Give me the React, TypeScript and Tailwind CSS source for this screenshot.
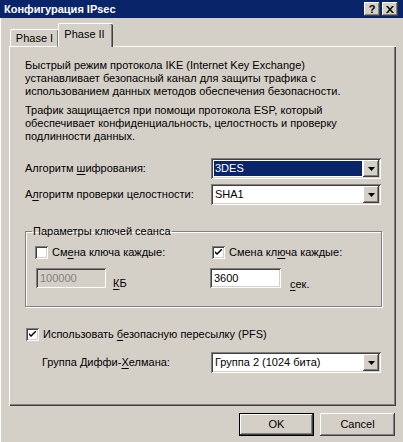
import React from "react";

const raised =
  "shadow-[inset_-1px_-1px_#404040,inset_1px_1px_#ffffff,inset_-2px_-2px_#808080,inset_2px_2px_#d4d0c8]";
const sunken =
  "shadow-[inset_1px_1px_#808080,inset_-1px_-1px_#ffffff,inset_2px_2px_#404040,inset_-2px_-2px_#d4d0c8]";

function U({ children }: { children: React.ReactNode }) {
  return <span className="underline underline-offset-[2px]">{children}</span>;
}

function Arrow() {
  return (
    <div className={`w-[16px] h-[17px] bg-[#d4d0c8] flex items-center justify-center ${raised}`}>
      <svg width="7" height="4" viewBox="0 0 7 4">
        <polygon points="0,0 7,0 3.5,4" fill="#000" />
      </svg>
    </div>
  );
}

function Combo({ value, selected }: { value: string; selected?: boolean }) {
  return (
    <div className={`w-[170px] h-[21px] bg-white flex items-center p-[2px] ${sunken}`}>
      <div className="flex-1 h-full pl-[1px] pr-[1px] flex items-center">
        <div
          className={
            selected
              ? "w-full h-[15px] bg-[#0a246a] text-white pl-[1px] flex items-center"
              : "w-full h-[15px] pl-[1px] flex items-center"
          }
        >
          {value}
        </div>
      </div>
      <Arrow />
    </div>
  );
}

function Check({ checked }: { checked?: boolean }) {
  return (
    <div className={`w-[13px] h-[13px] bg-white shrink-0 flex items-center justify-center ${sunken}`}>
      {checked && (
        <svg width="7" height="7" viewBox="0 0 7 7">
          <path d="M0 2 L0 4 L2 6 L7 1 L7 -1 L2 4 Z" fill="#000" />
        </svg>
      )}
    </div>
  );
}

function Button({ label, primary }: { label: string; primary?: boolean }) {
  return (
    <div
      className={`w-[75px] h-[23px] bg-[#d4d0c8] flex items-center justify-center ${
        primary
          ? "border border-black shadow-[inset_-1px_-1px_#404040,inset_1px_1px_#ffffff,inset_-2px_-2px_#808080]"
          : raised
      }`}
    >
      {label}
    </div>
  );
}

export default function App() {
  return (
    <div className="w-[403px] h-[442px] bg-[#d4d0c8] overflow-hidden flex flex-col font-['Liberation_Sans',Tahoma,sans-serif] text-[11px] leading-[13px] text-black">
      {/* title bar */}
      <div className="h-[18px] bg-[#0a246a] flex items-center justify-between pl-[4px] pr-[5px] shrink-0">
        <span className="text-white font-bold text-[11px]">Конфигурация IPsec</span>
        <div className="flex gap-[2px]">
          <div className={`w-[16px] h-[14px] bg-[#d4d0c8] flex items-center justify-center font-bold text-[11px] ${raised}`}>?</div>
          <div className={`w-[16px] h-[14px] bg-[#d4d0c8] flex items-center justify-center ${raised}`}>
            <svg width="8" height="7" viewBox="0 0 8 7">
              <path d="M0 0 L2 0 L4 2.5 L6 0 L8 0 L5 3.5 L8 7 L6 7 L4 4.5 L2 7 L0 7 L3 3.5 Z" fill="#000" />
            </svg>
          </div>
        </div>
      </div>

      <div className="flex-1 flex flex-col pl-[8px] pr-[7px] border-l border-[#ffffff]">
        {/* tabs */}
        <div className="flex items-end pt-[5px] pl-[1px] relative z-10 mb-[-1px]">
          <div className="w-[48px] h-[18px] border-t border-l border-white rounded-tl-[2px] shadow-[inset_-1px_0_#808080] flex items-center justify-center">
            Phase I
          </div>
          <div className="w-[55px] h-[24px] bg-[#d4d0c8] border-t border-l border-white rounded-tl-[2px] rounded-tr-[2px] shadow-[inset_-1px_0_#404040,inset_-2px_0_#808080] flex items-start justify-center pt-[4px] pr-[3px]">
            Phase II
          </div>
        </div>

        {/* panel */}
        <div className="h-[360px] border-t border-l border-white shadow-[inset_-1px_-1px_#404040,inset_-2px_-2px_#808080] pl-[15px] pt-[12px] flex flex-col">
          <p>
            Быстрый режим протокола IKE (Internet Key Exchange)
            <br />
            устанавливает безопасный канал для защиты трафика с
            <br />
            использованием данных методов обеспечения безопасности.
          </p>
          <p className="mt-[6px]">
            Трафик защищается при помощи протокола ESP, который
            <br />
            обеспечивает конфиденциальность, целостность и проверку
            <br />
            подлинности данных.
          </p>

          <div className="flex items-center mt-[15px]">
            <div className="w-[186px]">
              Алгоритм <U>ш</U>ифрования:
            </div>
            <Combo value="3DES" selected />
          </div>
          <div className="flex items-center mt-[5px]">
            <div className="w-[186px]">
              А<U>л</U>горитм проверки целостности:
            </div>
            <Combo value="SHA1" />
          </div>

          <fieldset className="w-[357px] mt-[20px] h-[82px] border border-[#808080] shadow-[inset_1px_1px_#ffffff,1px_1px_#ffffff]">
            <legend className="ml-[6px] px-[1px]">Параметры ключей сеанса</legend>
            <div className="flex mt-[8px] pl-[9px]">
              <div className="w-[177px] flex items-center gap-[4px]">
                <Check />
                <span>
                  См<U>е</U>на ключа каждые:
                </span>
              </div>
              <div className="flex items-center gap-[4px]">
                <Check checked />
                <span>
                  Смена кл<U>ю</U>ча каждые:
                </span>
              </div>
            </div>
            <div className="flex mt-[9px] pl-[9px]">
              <div className="w-[175px] pl-[1px] flex items-end gap-[7px]">
                <div className={`w-[70px] h-[20px] bg-[#d4d0c8] text-[#808080] flex items-center pl-[4px] ${sunken}`}>
                  100000
                </div>
                <span className="mb-[-2px]">
                  <U>К</U>Б
                </span>
              </div>
              <div className="flex items-end gap-[9px]">
                <div className={`w-[71px] h-[20px] bg-white flex items-center pl-[4px] ${sunken}`}>3600</div>
                <span className="mb-[-3px]">
                  <U>с</U>ек.
                </span>
              </div>
            </div>
          </fieldset>

          <div className="flex items-center gap-[4px] mt-[21px] pl-[1px]">
            <Check checked />
            <span>
              Использовать <U>б</U>езопасную пересылку (PFS)
            </span>
          </div>
          <div className="flex items-center mt-[11px]">
            <div className="w-[186px] pl-[17px]">
              Группа Диффи-<U>Х</U>елмана:
            </div>
            <Combo value="Группа 2 (1024 бита)" />
          </div>
        </div>

        {/* buttons */}
        <div className="flex justify-end gap-[6px] mt-[7px] pr-[1px]">
          <Button label="OK" primary />
          <Button label="Cancel" />
        </div>
      </div>
    </div>
  );
}
